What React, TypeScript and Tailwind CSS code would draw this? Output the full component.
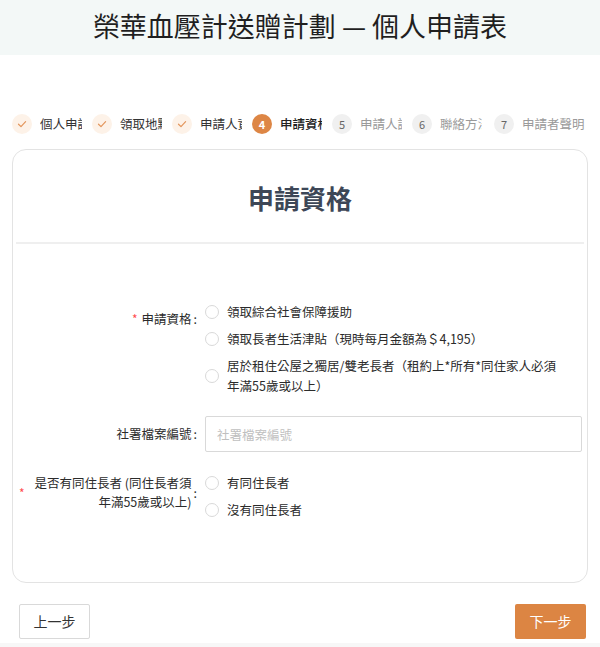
import React from "react";

type StepState = "done" | "active" | "todo";

const steps: { label: string; state: StepState }[] = [
  { label: "個人申請", state: "done" },
  { label: "領取地點", state: "done" },
  { label: "申請人資料", state: "done" },
  { label: "申請資格", state: "active" },
  { label: "申請人證明", state: "todo" },
  { label: "聯絡方法", state: "todo" },
  { label: "申請者聲明", state: "todo" },
];

const font = { fontFamily: '"Noto Sans CJK TC", "Noto Sans", sans-serif' };

function Check() {
  return (
    <svg width="10" height="10" viewBox="0 0 10 10" fill="none">
      <path d="M1.5 5.2 L4 7.6 L8.6 2.6" stroke="#e3955b" strokeWidth="1.2" strokeLinecap="round" strokeLinejoin="round" />
    </svg>
  );
}

function Step({ label, state, index, last }: { label: string; state: StepState; index: number; last: boolean }) {
  return (
    <div className={last ? "ml-[2px] flex items-center gap-2" : "flex w-[80px] shrink-0 items-center gap-2"}>
      {state === "done" && (
        <span className="flex h-5 w-5 shrink-0 items-center justify-center rounded-full bg-[#fdf2e8]">
          <Check />
        </span>
      )}
      {state === "active" && (
        <span className="flex h-5 w-5 shrink-0 items-center justify-center rounded-full bg-[#dd8645] text-[11px] font-semibold text-white">
          {index}
        </span>
      )}
      {state === "todo" && (
        <span className="flex h-5 w-5 shrink-0 items-center justify-center rounded-full bg-[#f0f0f0] text-[11px] text-[#666]">
          {index}
        </span>
      )}
      <span
        className={
          (last ? "" : "w-[42px] ") +
          "overflow-hidden whitespace-nowrap text-[12.5px] leading-5 " +
          (state === "todo" ? "text-[#9a9a9a]" : state === "active" ? "font-medium text-[#222]" : "text-[#333]")
        }
      >
        {label}
      </span>
    </div>
  );
}

function Radio({ children, tall }: { children: React.ReactNode; tall?: boolean }) {
  return (
    <label className={"flex items-center gap-2 " + (tall ? "h-[40px]" : "h-5")}>
      <span className="h-[14px] w-[14px] shrink-0 rounded-full border border-[#d9d9d9] bg-white" />
      <span className="text-[12.5px] leading-5 text-[#2b2b2b]">{children}</span>
    </label>
  );
}

function Colon() {
  return <span className="ml-[2px] mr-2">:</span>;
}

export default function App() {
  return (
    <div className="min-h-[647px] bg-white" style={font}>
      <header className="flex h-[55px] items-center justify-center bg-[#f3f8f7] pb-[5px]">
        <h1 className="text-[27px] leading-none text-[#1f1f1f]">榮華血壓計送贈計劃 — 個人申請表</h1>
      </header>

      <nav className="mt-[59px] flex px-[12px]">
        {steps.map((s, i) => (
          <Step key={s.label} label={s.label} state={s.state} index={i + 1} last={i === steps.length - 1} />
        ))}
      </nav>

      <section className="mx-[12px] mt-[15px] rounded-[14px] border border-[#e3e3e3] px-[3px] pb-[62px] pt-[30px]">
        <h2 className="text-center text-[26px] font-bold leading-[36px] text-[#3d4757]">申請資格</h2>
        <div className="mt-[26px] h-[2px] bg-[#efefef]" />

        <div className="mt-[58px] flex flex-col text-[12.5px] text-[#2b2b2b]">
          {/* 申請資格 */}
          <div className="flex">
            <div className="flex w-[189px] shrink-0 items-center justify-end self-start pt-[7px] leading-5">
              <span className="mr-1 text-[12px] text-[#ff4d4f]">*</span>
              <span>申請資格</span>
              <Colon />
            </div>
            <div className="flex flex-col gap-[7px]">
              <Radio>領取綜合社會保障援助</Radio>
              <Radio>領取長者生活津貼（現時每月金額為＄4,195）</Radio>
              <Radio tall>
                居於租住公屋之獨居/雙老長者（租約上*所有*同住家人必須
                <br />
                年滿55歲或以上）
              </Radio>
            </div>
          </div>

          {/* 社署檔案編號 */}
          <div className="mt-[20px] flex items-center">
            <div className="flex w-[189px] shrink-0 items-center justify-end leading-5">
              <span>社署檔案編號</span>
              <Colon />
            </div>
            <input
              className="h-[36px] w-[377px] rounded-[2px] border border-[#d9d9d9] px-[11px] text-[12.5px] outline-none placeholder:text-[#bfbfbf]"
              placeholder="社署檔案編號"
            />
          </div>

          {/* 同住長者 */}
          <div className="mt-[21px] flex">
            <div className="flex h-[38px] w-[189px] shrink-0 items-center self-start leading-[19px]">
              <span className="ml-[3px] text-[12px] text-[#ff4d4f]">*</span>
              <span className="flex-1 text-right">
                是否有同住長者 (同住長者須
                <br />
                年滿55歲或以上)
              </span>
              <Colon />
            </div>
            <div className="flex flex-col gap-[7px]">
              <Radio>有同住長者</Radio>
              <Radio>沒有同住長者</Radio>
            </div>
          </div>
        </div>
      </section>

      <div className="mt-[21px] flex justify-between pb-[4px] pl-[19px] pr-[14px]">
        <button className="h-[35px] w-[71px] rounded-[2px] border border-[#d9d9d9] bg-white text-[14px] text-[#333]">
          上一步
        </button>
        <button className="h-[35px] w-[71px] rounded-[2px] bg-[#dc8543] text-[14px] text-white">下一步</button>
      </div>
      <div className="h-[20px] bg-[#f7f7f7]" />
    </div>
  );
}
